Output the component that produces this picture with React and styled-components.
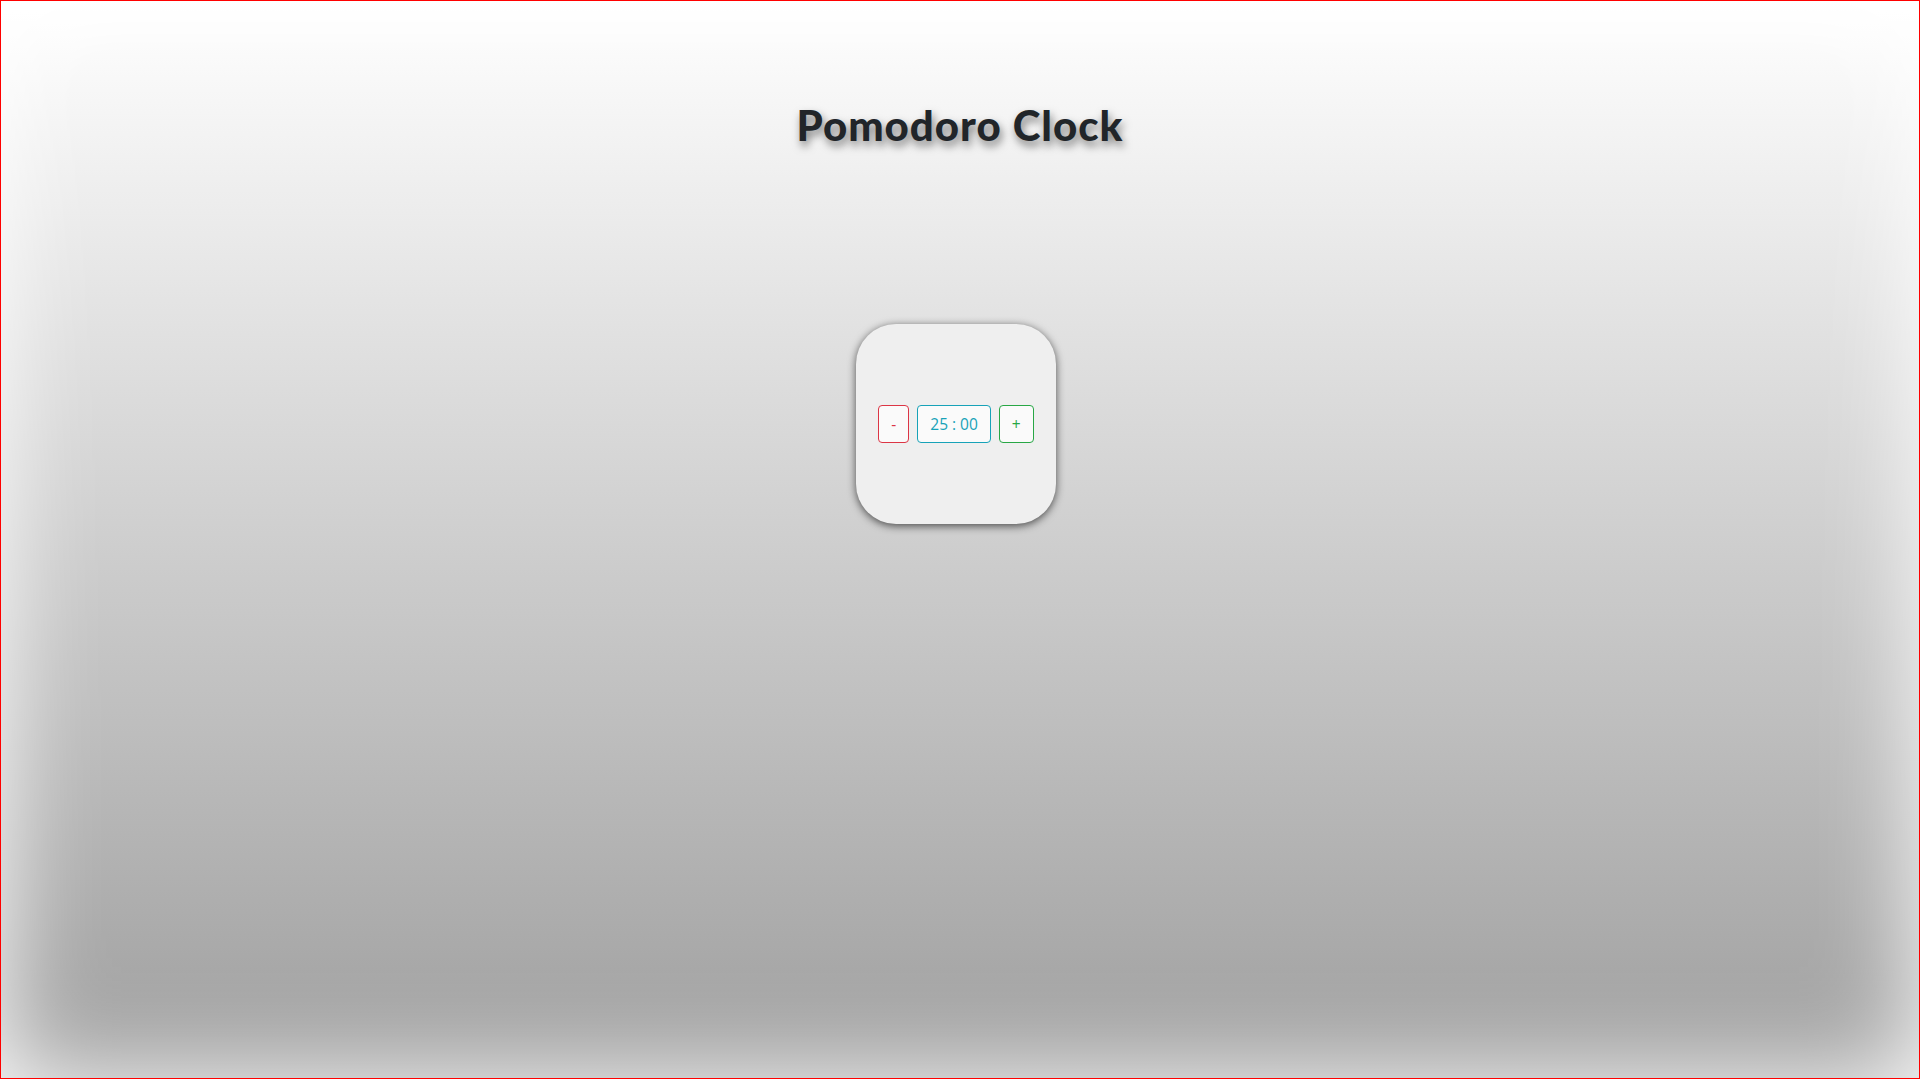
import React from "react";
import styled, { createGlobalStyle } from "styled-components";

const Global = createGlobalStyle`
  html, body { margin: 0; padding: 0; }
  body { font-family: "Open Sans", "Noto Sans", sans-serif; color: #212529; }
  * { box-sizing: border-box; }
`;

const Page = styled.div`
  min-height: 100vh;
  border: 1px solid #ff0000;
  background: linear-gradient(to bottom, #ffffff 0%, #9e9e9e 100%);
  box-shadow: inset 0 0 100px #ffffff;
  display: flex;
  flex-direction: column;
  align-items: center;
`;

const Title = styled.h1`
  margin: 99px 0 0;
  font-family: "Lato", "Open Sans", sans-serif;
  font-weight: 900;
  font-size: 42px;
  letter-spacing: 1px;
  line-height: 1.2;
  color: #212529;
  text-shadow: 2px 5px 8px rgba(0, 0, 0, 0.5);
`;

const CardRow = styled.div`
  width: 100%;
  display: flex;
  justify-content: center;
  padding-right: 8px;
  margin-top: 174px;
`;

const Card = styled.div`
  width: 200px;
  height: 200px;
  border-radius: 40px;
  background: #efefef;
  box-shadow: 0 2px 8px rgba(0, 0, 0, 0.65);
  display: flex;
  align-items: center;
  justify-content: center;
  gap: 8px;
`;

const tones = {
  danger: "#dc3545",
  info: "#17a2b8",
  success: "#28a745",
};

const Btn = styled.button`
  height: 38px;
  padding: 6px 12px;
  border: 1px solid ${(p) => tones[p.$tone]};
  border-radius: 4px;
  background: #fafafa;
  color: ${(p) => tones[p.$tone]};
  font-family: "Open Sans", "Noto Sans", sans-serif;
  font-size: 15.5px;
  line-height: 24px;
  cursor: pointer;
`;

export default function App() {
  return (
    <Page>
      <Global />
      <Title>Pomodoro Clock</Title>
      <CardRow>
        <Card>
          <Btn $tone="danger">-</Btn>
          <Btn $tone="info">25 : 00</Btn>
          <Btn $tone="success">+</Btn>
        </Card>
      </CardRow>
    </Page>
  );
}
